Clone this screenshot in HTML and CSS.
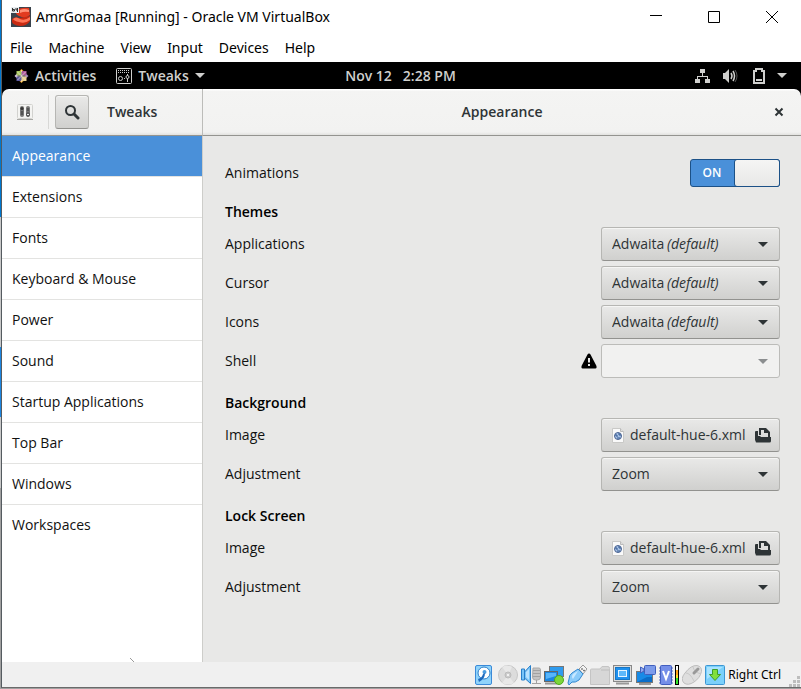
FILE: index.html
```html
<!DOCTYPE html>
<html lang="en">
<head>
<meta charset="utf-8">
<meta name="viewport" content="width=device-width, initial-scale=1">
<title>AmrGomaa [Running] - Oracle VM VirtualBox</title>
<link rel="stylesheet" href="styles.css">
</head>
<body>
<div class="window">
  <header class="titlebar">
    <svg class="app-icon" width="20" height="20" viewBox="0 0 20 20" aria-hidden="true">
      <rect width="20" height="20" fill="#39434d"/>
      <path d="M1 12Q4 9 8 11L19 9V14Q16 19 9 19Q2 18 1 15Z" fill="#c92a12"/>
      <path d="M2 12Q5 9 9 12Q14 14 19 10V13Q14 17 8 15Q3 14 2 12Z" fill="#ff7658"/>
      <path d="M5 4Q9 0 18 1L19 8Q14 12 8 9Q4 7 5 4Z" fill="#e23b20"/>
      <path d="M9 3Q13 1 18 3L18 5Q13 4 9 6Z" fill="#ff9076"/>
      <rect width="8" height="6" fill="#e9edf0"/>
      <path d="M1.500 1v3h2v-1.500h-2M5 1v2h2M6.500 1v4" fill="none" stroke="#333" stroke-width="1"/>
    </svg>
    <h1 class="title">AmrGomaa [Running] - Oracle VM VirtualBox</h1>
    <div class="window-controls">
      <button type="button" aria-label="Minimize"><svg width="12" height="12" viewBox="0 0 12 12"><path d="M0 4.500h12"/></svg></button>
      <button type="button" aria-label="Maximize"><svg width="12" height="12" viewBox="0 0 12 12"><path d="M.5.5h11v11H.5z"/></svg></button>
      <button type="button" aria-label="Close"><svg width="12" height="12" viewBox="0 0 12 12"><path d="M0 0l12 12M12 0L0 12"/></svg></button>
    </div>
  </header>

  <nav class="menubar" aria-label="Virtual machine menu">
    <button type="button">File</button>
    <button type="button">Machine</button>
    <button type="button">View</button>
    <button type="button">Input</button>
    <button type="button">Devices</button>
    <button type="button">Help</button>
  </nav>

  <div class="topbar">
    <div class="topbar-left">
      <button type="button" class="activities">
        <svg width="15" height="14" viewBox="0 0 14 14" aria-hidden="true">
          <path d="M7 0l3 3H4z" fill="#efa724"/><path d="M7 14l-3-3h6z" fill="#efa724"/>
          <path d="M0 7l3-3v6z" fill="#c9b1dd"/><path d="M14 7l-3-3v6z" fill="#7b66a8"/>
          <path d="M2 2h4.500v4.500H2z" fill="#a9c95c"/><path d="M7.500 2H12v4.500H7.500z" fill="#ad5a9c"/>
          <path d="M2 7.500h4.500V12H2z" fill="#5d5a9e"/><path d="M7.500 7.500H12V12H7.500z" fill="#e8cf8c"/>
          <path d="M7 1v12M1 7h12M3 3l8 8M11 3l-8 8" stroke="#e9e4dc" stroke-width=".7"/>
        </svg>
        Activities
      </button>
      <button type="button" class="app-menu">
        <svg width="16" height="16" viewBox="0 0 16 16" aria-hidden="true">
          <rect x=".5" y=".5" width="15" height="15" rx="1" fill="none" stroke="#d0d0ce"/>
          <path d="M2 2.500h12M2 4.500h12" stroke="#d0d0ce" stroke-dasharray="1 1"/>
          <circle cx="4.500" cy="10.500" r="2" fill="none" stroke="#d0d0ce"/>
          <path d="M8 10.500h1M11.500 6v8" stroke="#d0d0ce"/><circle cx="11.500" cy="9" r="1.500" fill="#000" stroke="#d0d0ce"/>
        </svg>
        Tweaks
        <svg width="10" height="5" viewBox="0 0 10 5" aria-hidden="true"><path d="M0 0h10L5 5z" fill="#d0d0ce"/></svg>
      </button>
    </div>
    <button type="button" class="clock"><span>Nov 12</span><span>2:28 PM</span></button>
    <button type="button" class="tray" aria-label="System menu">
      <svg width="16" height="16" viewBox="0 0 16 16" fill="#d0d0ce"><path d="M5 1h5v4H5zM0 11h5v4H0zM10 11h5v4h-5zM7 5h1v3H7zM2 8h11v3h-1V9H3v2H2z"/></svg>
      <svg width="16" height="16" viewBox="0 0 16 16"><path d="M0 5h2l4-4v14l-4-4H0z" fill="#d0d0ce"/><path d="M8 5q2 3 0 6M10 3q3 5 0 10" fill="none" stroke="#d0d0ce" stroke-width="1.500"/><path d="M12 2q4 6 0 12" fill="none" stroke="#555"/></svg>
      <svg width="14" height="16" viewBox="0 0 14 16"><path d="M5 1h6v2h2v12H3V3h2z" fill="none" stroke="#d0d0ce" stroke-width="2"/><path d="M5 12h6" stroke="#d0d0ce" stroke-width="2"/></svg>
      <svg width="10" height="5" viewBox="0 0 10 5"><path d="M0 0h10L5 5z" fill="#d0d0ce"/></svg>
    </button>
  </div>

  <div class="tweaks">
    <div class="header-left">
      <svg class="tweaks-icon" width="16" height="16" viewBox="0 0 16 16" aria-hidden="true">
        <rect x=".5" y=".5" width="15" height="14" rx="1" fill="#f4f4f2" stroke="#d2d2cf"/><path d="M0 15.500h16" stroke="#a7a7a4"/>
        <rect x="3" y="2" width="4" height="11" rx="2" fill="#777"/><rect x="9" y="2" width="4" height="11" rx="2" fill="#777"/>
        <circle cx="5" cy="4.500" r="1.500" fill="#333"/><circle cx="11" cy="10.500" r="1.500" fill="#eee" stroke="#333"/><path d="M5 7v4M11 4v3" stroke="#333"/>
      </svg>
      <span class="separator"></span>
      <button type="button" class="button search" aria-label="Search"><svg width="16" height="16" viewBox="0 0 16 16" fill="none" stroke="#2e3436"><circle cx="6.500" cy="6.500" r="4.500" stroke-width="2"/><path d="M10 10l4 4" stroke-width="3" stroke-linecap="round"/></svg></button>
      <h2>Tweaks</h2>
    </div>
    <div class="header-right">
      <h2>Appearance</h2>
      <button type="button" class="close" aria-label="Close Tweaks"><svg width="10" height="10" viewBox="0 0 10 10"><path d="M1.500 1.500l7 7M8.500 1.500l-7 7" stroke="#2e3436" stroke-width="2"/></svg></button>
    </div>

    <nav class="sidebar" aria-label="Tweaks sections">
      <a href="#appearance" class="selected" aria-current="page">Appearance</a>
      <a href="#extensions">Extensions</a>
      <a href="#fonts">Fonts</a>
      <a href="#keyboard">Keyboard &amp; Mouse</a>
      <a href="#power">Power</a>
      <a href="#sound">Sound</a>
      <a href="#startup">Startup Applications</a>
      <a href="#topbar">Top Bar</a>
      <a href="#windows">Windows</a>
      <a href="#workspaces">Workspaces</a>
      <svg class="pointer-tip" width="4" height="4" viewBox="0 0 4 4" aria-hidden="true"><path d="M0 .5h1M1 1.500h1M2 2.500h1M3 3.500h1" stroke="#999"/></svg>
    </nav>

    <main class="settings" id="appearance">
      <div class="row">
        <label for="animations">Animations</label>
        <label class="switch"><input type="checkbox" role="switch" id="animations" checked><span class="on">ON</span><span class="knob"></span></label>
      </div>

      <h3>Themes</h3>
      <div class="row">
        <label for="applications">Applications</label>
        <span class="combo"><select id="applications"><option>Adwaita</option></select><em>(default)</em><svg class="arrow" width="10" height="5" viewBox="0 0 10 5" aria-hidden="true"><path d="M0 0h10L5 5z"/></svg></span>
      </div>
      <div class="row">
        <label for="cursor">Cursor</label>
        <span class="combo"><select id="cursor"><option>Adwaita</option></select><em>(default)</em><svg class="arrow" width="10" height="5" viewBox="0 0 10 5" aria-hidden="true"><path d="M0 0h10L5 5z"/></svg></span>
      </div>
      <div class="row">
        <label for="icons">Icons</label>
        <span class="combo"><select id="icons"><option>Adwaita</option></select><em>(default)</em><svg class="arrow" width="10" height="5" viewBox="0 0 10 5" aria-hidden="true"><path d="M0 0h10L5 5z"/></svg></span>
      </div>
      <div class="row">
        <label for="shell">Shell</label>
        <svg class="warning" width="16" height="16" viewBox="0 0 16 16" aria-hidden="true"><path d="M8 .5Q9 .5 9.500 1.500L15.500 13Q16 15.500 14.500 15.500h-13Q0 15.500.5 13L6.500 1.500Q7 .5 8 .5z"/><path d="M8 5v4.500M8 11v2" stroke="#e8e8e7" stroke-width="2"/></svg>
        <span class="combo"><select id="shell" disabled></select><svg class="arrow" width="10" height="5" viewBox="0 0 10 5" aria-hidden="true"><path d="M0 0h10L5 5z"/></svg></span>
      </div>

      <h3>Background</h3>
      <div class="row">
        <label for="bg-image">Image</label>
        <button type="button" class="button file" id="bg-image">
          <svg width="12" height="16" viewBox="0 0 12 16" aria-hidden="true"><path d="M.5 1.500h8l3 3v11H.5z" fill="#fafafa" stroke="#c9c9c7"/><path d="M8.500 1.500v3h3" fill="#ddd" stroke="#bbb"/><circle cx="6" cy="9" r="3.500" fill="#a9c3e6" stroke="#48618f"/><path d="M4 7v2h2M6 7h2v2M5 11h3" stroke="#31578f" fill="none"/></svg>
          <span>default-hue-6.xml</span>
          <svg width="16" height="16" viewBox="0 0 16 16" aria-hidden="true"><path d="M1 4h2v6L1 14Q0 14 0 13V5Q0 4 1 4zM4 8V1h7l4 4v5h-2V6H9V3H6v5zM3 9h2l1 1h10v4q0 1.500-1.500 1.500h-13Q0 15.500 1 13z" fill="#2e3436"/></svg>
        </button>
      </div>
      <div class="row">
        <label for="bg-adjust">Adjustment</label>
        <span class="combo"><select id="bg-adjust"><option>Zoom</option></select><svg class="arrow" width="10" height="5" viewBox="0 0 10 5" aria-hidden="true"><path d="M0 0h10L5 5z"/></svg></span>
      </div>

      <h3>Lock Screen</h3>
      <div class="row">
        <label for="lock-image">Image</label>
        <button type="button" class="button file" id="lock-image">
          <svg width="12" height="16" viewBox="0 0 12 16" aria-hidden="true"><path d="M.5 1.500h8l3 3v11H.5z" fill="#fafafa" stroke="#c9c9c7"/><path d="M8.500 1.500v3h3" fill="#ddd" stroke="#bbb"/><circle cx="6" cy="9" r="3.500" fill="#a9c3e6" stroke="#48618f"/><path d="M4 7v2h2M6 7h2v2M5 11h3" stroke="#31578f" fill="none"/></svg>
          <span>default-hue-6.xml</span>
          <svg width="16" height="16" viewBox="0 0 16 16" aria-hidden="true"><path d="M1 4h2v6L1 14Q0 14 0 13V5Q0 4 1 4zM4 8V1h7l4 4v5h-2V6H9V3H6v5zM3 9h2l1 1h10v4q0 1.500-1.500 1.500h-13Q0 15.500 1 13z" fill="#2e3436"/></svg>
        </button>
      </div>
      <div class="row">
        <label for="lock-adjust">Adjustment</label>
        <span class="combo"><select id="lock-adjust"><option>Zoom</option></select><svg class="arrow" width="10" height="5" viewBox="0 0 10 5" aria-hidden="true"><path d="M0 0h10L5 5z"/></svg></span>
      </div>
    </main>
  </div>

  <footer class="statusbar">
    <svg width="20" height="20" viewBox="0 0 20 20"><rect x=".5" y=".5" width="16" height="19" rx="1.500" fill="#8fd3fb" stroke="#3b8ad8"/><circle cx="9" cy="8" r="6" fill="#fff" stroke="#2e7fc9"/><circle cx="9.500" cy="7" r="2" fill="#4b9be0"/><path d="M10 8q0 6-6 9l-1-3q4-1 5-5z" fill="#1e69bd"/></svg>
    <svg width="20" height="20" viewBox="0 0 20 20"><circle cx="10" cy="10" r="9.500" fill="#dcdcdc" stroke="#c6c6c6"/><path d="M10 10L4 2Q9-1 14 2zM10 10l6 8q-6 3-12 0z" fill="#e8e8e8"/><circle cx="10" cy="10" r="3" fill="#ccc" stroke="#bbb"/><circle cx="10" cy="10" r="1" fill="#fff"/></svg>
    <svg width="20" height="20" viewBox="0 0 20 20"><path d="M12 3h6q1.500 0 1.500 2v7q0 3-3 3h-2q-3 0-3-3z" fill="#c4c4c4" stroke="#aaa"/><path d="M12 5.500h7M12 8.500h7M12 11.500h7M15.500 15v3M11 18.500h9" fill="none" stroke="#a2a2a2"/><path d="M.5 4v11h3V4zM3.500 7l6-6.500v18L3.500 13z" fill="#79c4f7" stroke="#287fca"/><path d="M5 7l3-3v11l-3-3z" fill="#b9e2ff"/></svg>
    <svg width="20" height="20" viewBox="0 0 20 20"><rect x="5.500" y="1.500" width="14" height="10" fill="#2f9bee" stroke="#777"/><rect x=".5" y="6.500" width="13" height="10" fill="#1c86e0" stroke="#666"/><path d="M2 8h10v3L2 14z" fill="#57b5fa"/><path d="M1 18.500h12" stroke="#999" stroke-width="2"/><circle cx="15" cy="15" r="4.500" fill="#7dd63b" stroke="#4ea91d"/></svg>
    <svg width="20" height="20" viewBox="0 0 20 20"><path d="M12 4l4-4 4 4-4 5z" fill="#f4f4f4" stroke="#999"/><path d="M14.500 3.500l1 1M16.500 5l1 1" stroke="#555" stroke-width="1.500"/><path d="M5 8l6-4 5 5-4 6q-4 3-7 2l-3 3-1-2 1-4q0-4 3-6z" fill="#8acbfa" stroke="#3388cf"/><path d="M6 9l5-3-5 8q-2-2 0-5z" fill="#c8e8ff"/></svg>
    <svg width="20" height="20" viewBox="0 0 20 20"><path d="M.5 5q0-1 1-1H10l2-2.500h6q1.500 0 1.500 2V19.500H.5z" fill="#d7d7d7" stroke="#c4c4c4"/><path d="M11 5h8" stroke="#bdbdbd"/></svg>
    <svg width="20" height="20" viewBox="0 0 20 20"><rect x=".5" y=".5" width="18" height="16" fill="#ddd" stroke="#888"/><rect x="2.500" y="2.500" width="14" height="12" fill="#1e90ee" stroke="#1776c4"/><rect x="5.500" y="5.500" width="8" height="6" fill="#5cb8fb" stroke="#e4f4ff"/><path d="M3 18.500h13" stroke="#999" stroke-width="2"/></svg>
    <svg width="20" height="20" viewBox="0 0 20 20"><rect x=".5" y="6.500" width="16" height="11" fill="#178ae6" stroke="#777"/><path d="M1 17l10-5h5v5z" fill="#0a6dc8"/><path d="M3 19h12" stroke="#999" stroke-width="2"/><rect x="8.500" y=".5" width="11" height="9" rx="1" fill="#7c9bea" stroke="#405fbd"/><path d="M8 6L4.500 8V2L8 4z" fill="#91aaf0" stroke="#405fbd"/></svg>
    <svg width="20" height="20" viewBox="0 0 20 20"><path d="M0 3h14M0 6h14M0 9h14M0 12h14M0 15h14M0 18h14" stroke="#526bc5"/><rect x="1.500" y=".5" width="11" height="19" rx="1" fill="#748ee8" stroke="#425ebf"/><path d="M4 6l3 8 3-8" fill="none" stroke="#fff" stroke-width="2"/><rect x="16" y="0" width="4" height="20" fill="#000"/><path d="M17 1h2v4h-2z" fill="#fff"/><path d="M17 5h2v5h-2z" fill="#ffa21a"/><path d="M17 10h2v3h-2z" fill="#ffdf22"/><path d="M17 13h2v6h-2z" fill="#31e62c"/></svg>
    <svg width="20" height="20" viewBox="0 0 20 20"><path d="M3 8Q9 0 15 .5q5 1 4.500 6Q18 13 12 17q-6 4-10 1-4-4 1-10z" fill="#dedede" stroke="#bdbdbd"/><path d="M4 8q4 0 8 8M11 2q1 5 8 7" fill="none" stroke="#c8c8c8"/><path d="M12 8l4-4" stroke="#999" stroke-width="3" stroke-linecap="round"/></svg>
    <svg width="20" height="20" viewBox="0 0 20 20"><rect x=".5" y=".5" width="19" height="19" rx="1" fill="#7bd0fb" stroke="#3c96d3"/><path d="M2 2h16L2 14z" fill="#a9e3ff"/><path d="M7.500 4.500h5v5h3L10 15.500 4.500 9.500h3z" fill="#81df3c" stroke="#3d9c2b"/></svg>
    <span class="host-key">Right Ctrl</span>
    <svg class="grip" width="11" height="11" viewBox="0 0 11 11" fill="#bdbdbd"><path d="M8 0h3v3H8zM4 4h3v3H4zM8 4h3v3H8zM0 8h3v3H0zM4 8h3v3H4zM8 8h3v3H8z"/></svg>
  </footer>
</div>
</body>
</html>
```
FILE: styles.css
```css
* { box-sizing: border-box; }

body {
  margin: 0;
  min-height: 100vh;
  display: flex;
  padding: 0 0 1px 1px;
  background: linear-gradient(#0078d0 217px, #c8c8c8 217px 347px, #1e86e0 347px 417px, #c8c8c8 417px 488px, #a0a0a0 488px);
  font: 14px/20px "Open Sans", sans-serif;
  color: #111;
}

button, select, input { font: inherit; color: inherit; margin: 0; }

button {
  border: 0;
  padding: 0;
  background: none;
}

svg { display: block; flex: none; }

h1, h2, h3 { margin: 0; font-size: 14px; font-weight: 600; }

.window {
  flex: 1;
  display: flex;
  flex-direction: column;
  border-left: 1px solid #555b60;
  border-bottom: 1px solid #6a6a6a;
  background: #fff;
}

/* Host window */
.titlebar {
  display: flex;
  align-items: center;
  height: 34px;
  padding-left: 9px;
  gap: 5px;
}

.title, .menubar, .statusbar { font-family: "Noto Sans", sans-serif; font-weight: 400; color: #000; }

.title { flex: 1; white-space: nowrap; }

.window-controls { display: flex; }

.window-controls button {
  width: 58px;
  height: 34px;
  display: grid;
  place-items: center;
}

.window-controls path { fill: none; stroke: #000; }

.menubar {
  display: flex;
  align-items: center;
  height: 28px;
  padding-left: 8px;
  gap: 16px;
}

/* Guest top bar */
.topbar {
  display: grid;
  grid-template-columns: 1fr auto 1fr;
  align-items: center;
  height: 27px;
  padding: 0 14px 0 12px;
  background: #000;
  color: #d0d0ce;
  font-weight: 600;
}

.topbar-left, .topbar button { display: flex; align-items: center; }
.topbar-left { gap: 20px; }
.activities, .app-menu { gap: 6px; }
.topbar .clock { gap: 11px; }
.topbar .tray { justify-self: end; gap: 12px; }

/* Tweaks window */
.tweaks {
  flex: 1;
  display: grid;
  grid-template-columns: 201px 1fr;
  grid-template-rows: 47px 1fr;
  background: linear-gradient(#000 12px, #e8e8e7 12px);
}

.header-left, .header-right {
  display: flex;
  align-items: center;
  background: linear-gradient(#fff 1px, #f4f4f3 2px, #f2f2f1 43px, #e2e2e0);
  border-bottom: 1px solid #949490;
  color: #2e3436;
}

.header-left {
  padding-left: 15px;
  border-right: 1px solid #bcbcb9;
  border-top-left-radius: 7px;
}

.header-right {
  display: grid;
  grid-template-columns: 1fr auto 1fr;
  padding-right: 17px;
  padding-left: 17px;
  border-top-right-radius: 7px;
}

.header-right h2 { grid-column: 2; }
.close { justify-self: end; }

.separator {
  width: 1px;
  height: 34px;
  margin: 0 6px 0 15px;
  background: #d8d8d6;
}

.button, select {
  height: 34px;
  border: 1px solid #b6b6b3;
  border-bottom-color: #92928f;
  border-radius: 3px;
  background: linear-gradient(#e9e9e8, #d0d0ce);
  box-shadow: inset 0 1px #f5f5f4;
  color: #2e3436;
}

.search {
  width: 34px;
  display: grid;
  place-items: center;
  margin-right: 18px;
}

.sidebar {
  position: relative;
  background: #fff;
  border-right: 1px solid #cdcdca;
}

.sidebar a {
  display: block;
  padding: 10px;
  border-bottom: 1px solid #e3e3e1;
  color: #111;
  text-decoration: none;
}

.sidebar a:last-of-type { border-bottom: 0; }
.sidebar .selected { background: #4a90d9; color: #fff; }

.pointer-tip {
  position: absolute;
  right: 68px;
  bottom: 0;
}

.settings {
  display: flex;
  flex-direction: column;
  gap: 5px;
  padding: 23px 21px 0 22px;
}

.settings h3 { padding-top: 10px; color: #000; }

.row { display: flex; align-items: center; gap: 4px; }
.row > label:first-child { flex: 1; }

.switch {
  display: grid;
  grid-template-columns: 44px 1fr;
  width: 90px;
  height: 28px;
}

.switch input {
  grid-area: 1 / 1 / 2 / 3;
  appearance: none;
  border: 1px solid #1c5187;
  border-radius: 3px;
  background: #4a90d9;
}

.on {
  grid-area: 1 / 1;
  place-self: center;
  color: #fff;
  font-size: 12px;
  font-weight: 600;
}

.knob {
  grid-area: 1 / 2;
  border: 1px solid #1c5187;
  border-radius: 3px;
  background: linear-gradient(#f5f5f4, #e8e8e7);
}

.combo {
  display: grid;
  align-items: center;
  width: 179px;
}

.combo > * { grid-area: 1 / 1; }

.combo select {
  appearance: none;
  width: 100%;
  padding: 0 10px;
}

.combo em { margin-left: 66px; color: #2e3436; pointer-events: none; }

.arrow {
  justify-self: end;
  margin-right: 12px;
  fill: #2e3436;
  pointer-events: none;
}

.combo select:disabled {
  opacity: 1;
  border-color: #bcbcb9;
  background: #f1f1f0;
  box-shadow: none;
}

select:disabled ~ .arrow { fill: #8b8e8f; }

.file {
  display: flex;
  align-items: center;
  width: 179px;
  padding: 0 8px 0 10px;
  gap: 6px;
}

.file span { flex: 1; text-align: left; white-space: nowrap; }

/* Host status bar */
.statusbar {
  display: flex;
  align-items: center;
  justify-content: flex-end;
  gap: 3px;
  height: 25px;
  padding-right: 1px;
  background: #f0f0f0;
}

.host-key { font-size: 12px; }
.grip { align-self: flex-end; margin-left: 5px; }
```
